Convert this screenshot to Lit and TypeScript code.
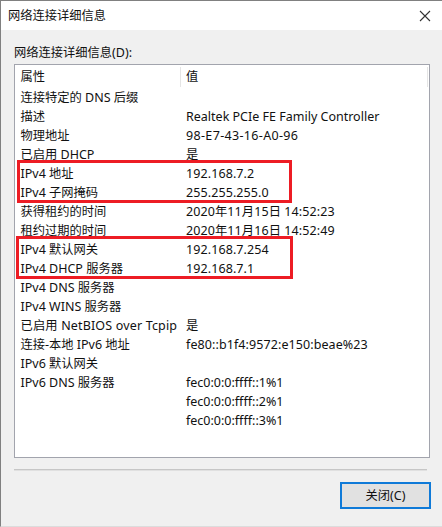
import { LitElement, html, css } from "lit";
import { customElement } from "lit/decorators.js";

// Optional class names adjust the tracking of the name and value cells.
type Row = [name: string, value: string, nameClass?: string, valueClass?: string];

const ROWS: Row[] = [
  ["连接特定的 DNS 后缀", ""],
  ["描述", "Realtek PCIe FE Family Controller"],
  ["物理地址", "98-E7-43-16-A0-96", "", "wide"],
  ["已启用 DHCP", "是"],
  ["IPv4 地址", "192.168.7.2", "", "slight"],
  ["IPv4 子网掩码", "255.255.255.0", "", "slight"],
  ["获得租约的时间", "2020年11月15日 14:52:23", "", "slight"],
  ["租约过期的时间", "2020年11月16日 14:52:49", "", "slight"],
  ["IPv4 默认网关", "192.168.7.254", "", "slight"],
  ["IPv4 DHCP 服务器", "192.168.7.1", "", "slight"],
  ["IPv4 DNS 服务器", ""],
  ["IPv4 WINS 服务器", ""],
  ["已启用 NetBIOS over Tcpip", "是", "loose"],
  ["连接-本地 IPv6 地址", "fe80::b1f4:9572:e150:beae%23", "", "slight"],
  ["IPv6 默认网关", ""],
  ["IPv6 DNS 服务器", "fec0:0:0:ffff::1%1"],
  ["", "fec0:0:0:ffff::2%1"],
  ["", "fec0:0:0:ffff::3%1"],
];

// Latin runs are set slightly larger than the Chinese text around them.
const mixed = (text: string) =>
  text
    .split(/([\x20-\x7e]+)/)
    .filter(Boolean)
    .map((run) => (/^[\x20-\x7e]/.test(run) ? html`<span class="latin">${run}</span>` : run));

@customElement("app-root")
export class AppRoot extends LitElement {
  static styles = css`
    :host {
      display: flex;
      flex-direction: column;
      box-sizing: border-box;
      width: 442px;
      height: 527px;
      border-top: 1px solid #808080;
      border-left: 1px solid #808080;
      border-bottom: 1px solid #dcdcdc;
      background: #f0f0f0;
      color: #111;
      font: 12.25px/19.06px "Noto Sans CJK SC", sans-serif;
      white-space: pre;
      overflow: hidden;
    }
    .latin {
      font-family: "Noto Sans", sans-serif;
      font-size: 12.5px;
    }
    .slight {
      letter-spacing: 0.09px;
    }
    .loose {
      letter-spacing: 0.16px;
    }
    .wide {
      letter-spacing: 0.34px;
    }
    .titlebar {
      display: flex;
      justify-content: space-between;
      align-items: center;
      box-sizing: border-box;
      height: 29px;
      flex: none;
      padding: 0 11px 0 7px;
      background: #fff;
    }
    .close {
      display: block;
      width: 12px;
      height: 12px;
    }
    .body {
      display: flex;
      flex-direction: column;
      padding: 13px 11px 0 13px;
    }
    .label {
      height: 21px;
    }
    .list {
      position: relative;
      box-sizing: border-box;
      width: 416px;
      height: 394px;
      border: 1px solid #a2a4ad;
      background: #fff;
    }
    .head,
    .row {
      display: grid;
      grid-template-columns: 165.5px 1fr;
      padding-left: 5.5px;
    }
    .head {
      height: 22.5px;
      padding-top: 2px;
      background:
        linear-gradient(#e5e5e5, #e5e5e5) 165px 2px / 1px 20px no-repeat,
        linear-gradient(#e5e5e5, #e5e5e5) 412px 2px / 1px 20px no-repeat;
      box-sizing: border-box;
    }
    .row {
      height: 19.06px;
    }
    .mark {
      position: absolute;
      box-sizing: border-box;
      border: 3px solid #ed1c24;
    }
    .address {
      left: 2px;
      top: 95px;
      width: 275px;
      height: 43px;
    }
    .gateway {
      left: 1px;
      top: 171px;
      width: 277px;
      height: 43px;
    }
    .rule {
      width: 413px;
      height: 1px;
      margin-top: 11px;
      background: #c6c6c6;
      border-bottom: 1px solid #e0e0e0;
    }
    .button {
      align-self: flex-end;
      box-sizing: border-box;
      width: 91px;
      height: 27px;
      margin: 11px 0 0;
      padding: 0;
      border: 2px solid #0f7ad8;
      background: #e1e1e1;
      color: inherit;
      font: inherit;
    }
  `;

  render() {
    return html`<div class="titlebar"><span>网络连接详细信息</span><svg class="close" viewBox="0 0 12 12"><path d="M1 1L11 11M11 1L1 11" fill="none" stroke="#333" stroke-width="1.1" /></svg></div><div class="body"><div class="label">${mixed("网络连接详细信息(D):")}</div><div class="list"><div class="head"><span>属性</span><span>值</span></div>${ROWS.map(
      ([name, value, nameClass = "", valueClass = ""]) => html`<div class="row"><span class=${nameClass}>${mixed(name)}</span><span class=${valueClass}>${mixed(value)}</span></div>`
    )}<div class="mark address"></div><div class="mark gateway"></div></div><div class="rule"></div><button class="button">${mixed("关闭(C)")}</button></div>`;
  }
}
